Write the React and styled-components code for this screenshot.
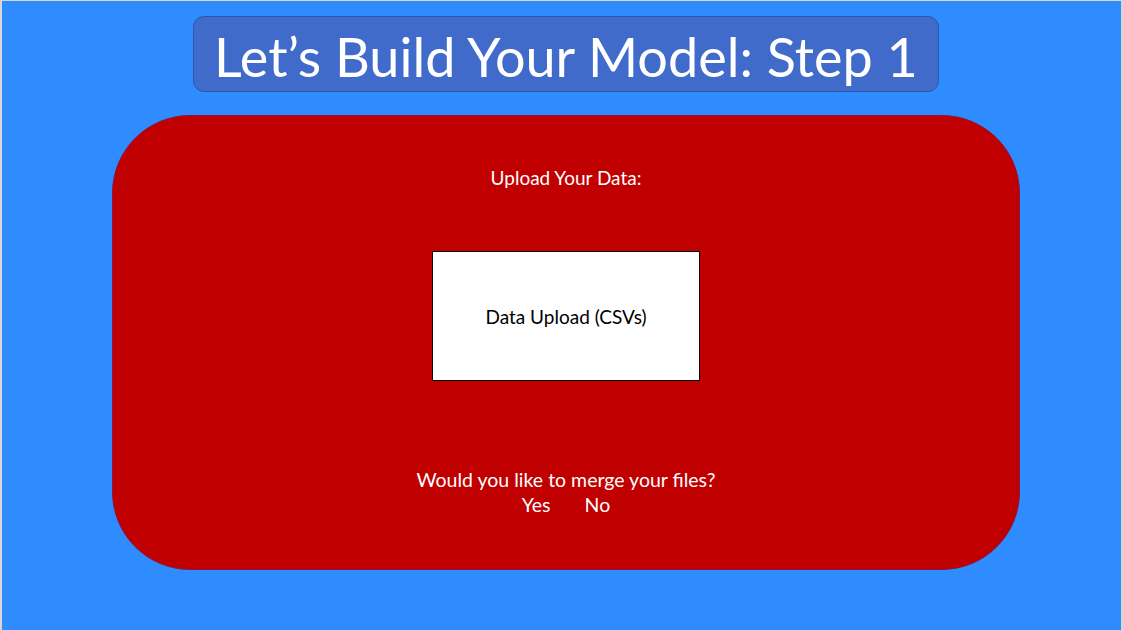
import React from "react";
import styled, { createGlobalStyle } from "styled-components";

const GlobalStyle = createGlobalStyle`
  html, body {
    margin: 0;
    padding: 0;
    background: #dcdcdc;
  }
  body {
    font-family: Lato, "Open Sans", sans-serif;
  }
`;

const Frame = styled.div`
  box-sizing: border-box;
  width: 1123px;
  height: 630px;
  border-top: 1px solid #d6d6d6;
  border-left: 2px solid #d6d6d6;
  border-right: 2px solid #d6d6d6;
  background: #2f8cff;
  display: flex;
  flex-direction: column;
  align-items: center;
  padding-top: 15px;
  padding-left: 9px;
`;

const TitleBox = styled.div`
  box-sizing: border-box;
  width: 746px;
  height: 76px;
  background: #416bcb;
  border: 1px solid #2d55a8;
  border-radius: 11px;
  display: flex;
  align-items: center;
  justify-content: center;
  padding-top: 5px;
`;

const Title = styled.h1`
  margin: 0;
  color: #ffffff;
  font-family: Lato, sans-serif;
  font-weight: 400;
  font-size: 54px;
  line-height: 1;
  white-space: nowrap;
`;

const Panel = styled.div`
  box-sizing: border-box;
  margin-top: 23px;
  width: 908px;
  height: 455px;
  background: #c00000;
  border: 1px solid #8e1540;
  border-radius: 78px;
  display: flex;
  flex-direction: column;
  align-items: center;
  padding-top: 50px;
`;

const Label = styled.div`
  color: #ffffff;
  font-size: 19px;
  line-height: 24px;
  text-align: center;
`;

const UploadBox = styled.div`
  box-sizing: border-box;
  margin-top: 61px;
  width: 268px;
  height: 130px;
  background: #ffffff;
  border: 1px solid #000000;
  display: flex;
  align-items: center;
  justify-content: center;
  color: #000000;
  font-size: 19px;
`;

const Question = styled.div`
  margin-top: 86px;
  display: flex;
  flex-direction: column;
  align-items: center;
  color: #ffffff;
  font-size: 19.5px;
  line-height: 25px;
`;

const Choices = styled.div`
  display: flex;
  gap: 34px;
`;

const Choice = styled.span`
  cursor: pointer;
`;

export default function App() {
  return (
    <>
      <GlobalStyle />
      <Frame>
        <TitleBox>
          <Title>Let’s Build Your Model: Step 1</Title>
        </TitleBox>
        <Panel>
          <Label>Upload Your Data:</Label>
          <UploadBox>Data Upload (CSVs)</UploadBox>
          <Question>
            Would you like to merge your files?
            <Choices>
              <Choice>Yes</Choice>
              <Choice>No</Choice>
            </Choices>
          </Question>
        </Panel>
      </Frame>
    </>
  );
}
